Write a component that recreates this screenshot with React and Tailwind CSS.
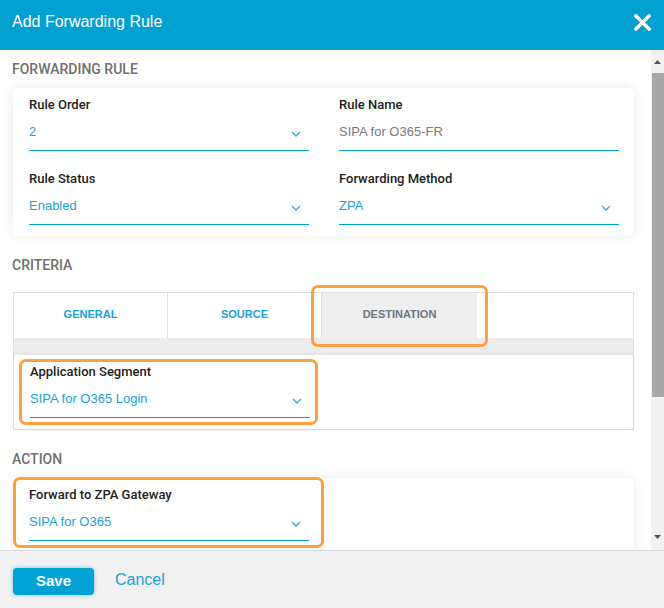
import React from "react";

const Chevron = () => (
  <svg width="10" height="6" viewBox="0 0 10 6" className="mt-[5px] mr-[8px]">
    <polyline points="1,1 5,5 9,1" fill="none" stroke="#3aa6d8" strokeWidth="1.3" />
  </svg>
);

function Field({ label, value, muted, select = true }) {
  return (
    <div>
      <div className="h-4 leading-4 text-[13px] font-medium text-[#222]" style={{ fontFamily: "Roboto, sans-serif" }}>
        {label}
      </div>
      <div className="h-[38px] flex items-center justify-between border-b border-[#00a1d2]">
        <span className={`text-[13px] ${muted ? "text-[#7a7a7a]" : "text-[#1a9fd6]"}`}>{value}</span>
        {select && <Chevron />}
      </div>
    </div>
  );
}

function Highlight({ className }) {
  return <div className={`absolute border-[3px] border-[#f9a03f] rounded-[7px] pointer-events-none ${className}`} />;
}

function SectionTitle({ children, className = "" }) {
  return (
    <div
      className={`h-4 leading-4 text-[14px] font-medium text-[#6f6f6f] uppercase ${className}`}
      style={{ fontFamily: "Roboto, sans-serif" }}
    >
      {children}
    </div>
  );
}

export default function App() {
  const tabs = ["General", "Source", "Destination"];

  return (
    <div
      className="w-[664px] h-[608px] flex flex-col overflow-hidden bg-white"
      style={{ fontFamily: '"Liberation Sans", Arial, sans-serif' }}
    >
      {/* header */}
      <div className="h-[50px] shrink-0 bg-[#00a0d1] flex items-center justify-between pl-3 pr-[13px] pb-[6px]">
        <h1 className="text-white text-[16px]">Add Forwarding Rule</h1>
        <svg width="17" height="17" viewBox="0 0 17 17">
          <path d="M2 2 L15 15 M15 2 L2 15" stroke="white" strokeWidth="3.4" strokeLinecap="square" />
        </svg>
      </div>

      <div className="flex-1 min-h-0 flex">
        <div className="flex-1 overflow-hidden pl-[13px] pr-[17px]">
          <SectionTitle className="mt-[11px] -ml-px">Forwarding Rule</SectionTitle>

          <div className="mt-[11px] bg-white rounded-[5px] shadow-[0_0_12px_rgba(0,0,0,0.09)] pt-[9px] pb-[11px] pl-4 pr-[15px] grid grid-cols-2 gap-x-[30px] gap-y-5">
            <Field label="Rule Order" value="2" />
            <Field label="Rule Name" value="SIPA for O365-FR" muted select={false} />
            <Field label="Rule Status" value="Enabled" />
            <Field label="Forwarding Method" value="ZPA" />
          </div>

          <SectionTitle className="mt-[21px] -ml-px">Criteria</SectionTitle>

          <div className="mt-[19px] border border-[#e0e0e0] bg-[#ececec]">
            <div className="flex h-[45px] bg-white">
              {tabs.map((t, i) => (
                <div
                  key={t}
                  className={`relative w-[154px] flex items-center justify-center pb-[3px] text-[11px] font-bold uppercase ${
                    i === 2 ? "bg-[#efefef] text-[#6c7580] w-[155px]" : "text-[#1ba0d6] border-r border-[#e0e0e0]"
                  }`}
                >
                  {t}
                  {i === 2 && <Highlight className="-left-[11px] -right-[11px] -top-[8px] -bottom-[9px]" />}
                </div>
              ))}
            </div>
            <div className="pt-[17px]">
              <div className="bg-white rounded-[3px] shadow-[0_0_4px_rgba(0,0,0,0.08)] pt-[9px] pb-[11px] pl-4">
                <div className="relative w-[280px]">
                  <Field label="Application Segment" value="SIPA for O365 Login" />
                  <Highlight className="-left-[11px] -right-[8px] -top-[5px] -bottom-[7px]" />
                </div>
              </div>
            </div>
          </div>

          <SectionTitle className="mt-[21px] -ml-px">Action</SectionTitle>

          <div className="mt-[11px] bg-white rounded-[5px] shadow-[0_0_12px_rgba(0,0,0,0.09)] pt-[9px] pb-[11px] pl-4">
            <div className="relative w-[280px]">
              <Field label="Forward to ZPA Gateway" value="SIPA for O365" />
              <Highlight className="-left-[16px] -right-[15px] -top-[10px] -bottom-[7px]" />
            </div>
          </div>
        </div>

        {/* scrollbar */}
        <div className="w-[13px] shrink-0 bg-[#f1f1f1] flex flex-col">
          <div className="h-[23px] flex items-center justify-center">
            <svg width="7" height="4" viewBox="0 0 7 4">
              <polygon points="0,4 3.5,0 7,4" fill="#505050" />
            </svg>
          </div>
          <div className="h-[324px] bg-[#a8a8a8] ml-px" />
          <div className="flex-1" />
          <div className="h-[17px] flex items-start justify-center pt-[2px]">
            <svg width="7" height="4" viewBox="0 0 7 4">
              <polygon points="0,0 3.5,4 7,0" fill="#505050" />
            </svg>
          </div>
        </div>
      </div>

      {/* footer */}
      <div className="h-[58px] shrink-0 border-t border-[#d9d9d9] bg-[#f2f2f2] flex items-center pl-[13px] gap-[21px]">
        <button className="w-[81px] h-[27px] rounded-[4px] bg-[#00a2d6] text-white font-bold text-[15px] shadow-[0_0_4px_rgba(0,162,214,0.5)] mt-[3px]">
          Save
        </button>
        <button className="text-[16px] text-[#1a9fd6]">Cancel</button>
      </div>
    </div>
  );
}
